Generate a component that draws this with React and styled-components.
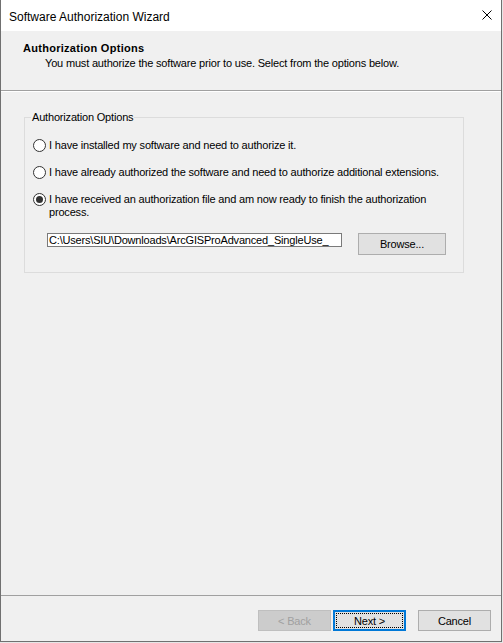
import React from "react";
import styled, { createGlobalStyle } from "styled-components";

const GlobalStyle = createGlobalStyle`
  html, body {
    margin: 0;
    padding: 0;
    background: #e6e6e6;
  }
  * {
    box-sizing: border-box;
  }
`;

export default function App() {
  return (
    <>
      <GlobalStyle />
      <Window>
        <TitleBar>
          <Title>Software Authorization Wizard</Title>
          <CloseIcon viewBox="0 0 10 10">
            <path d="M0.5 0.5 L9.5 9.5 M9.5 0.5 L0.5 9.5" stroke="#000" strokeWidth="1" />
          </CloseIcon>
        </TitleBar>

        <Header>
          <HeaderTitle>Authorization Options</HeaderTitle>
          <HeaderText>
            You must authorize the software prior to use. Select from the options below.
          </HeaderText>
        </Header>

        <Body>
          <Group>
            <Legend>Authorization Options</Legend>
            <Option>
              <Radio />
              <OptionText>I have installed my software and need to authorize it.</OptionText>
            </Option>
            <Option>
              <Radio />
              <OptionText>
                I have already authorized the software and need to authorize additional extensions.
              </OptionText>
            </Option>
            <Option>
              <Radio checked />
              <OptionText>
                I have received an authorization file and am now ready to finish the authorization
                <br />
                process.
              </OptionText>
            </Option>
            <FileRow>
              <PathInput>C:\Users\SIU\Downloads\ArcGISProAdvanced_SingleUse_</PathInput>
              <Button wide>Browse...</Button>
            </FileRow>
          </Group>
        </Body>

        <Footer>
          <Button disabled>&lt; Back</Button>
          <Button primary>Next &gt;</Button>
          <Button gap>Cancel</Button>
        </Footer>
      </Window>
    </>
  );
}

const Window = styled.div`
  width: 502px;
  height: 642px;
  display: flex;
  flex-direction: column;
  background: #f0f0f0;
  border: 1px solid #707070;
  border-top: none;
  font-family: "Liberation Sans", Arial, sans-serif;
  font-size: 11px;
  letter-spacing: -0.18px;
  color: #000;
`;

const TitleBar = styled.div`
  height: 31px;
  flex-shrink: 0;
  background: #fff;
  display: flex;
  align-items: center;
  justify-content: space-between;
  padding: 0 9px 0 8px;
  letter-spacing: 0;
`;

const Title = styled.span`
  font-size: 12px;
  line-height: 14px;
  margin-top: 2px;
`;

const CloseIcon = styled.svg`
  width: 10px;
  height: 10px;
  margin-top: -1px;
`;

const Header = styled.div`
  height: 60px;
  flex-shrink: 0;
  padding: 10px 0 0 22px;
  border-bottom: 1px solid #a0a0a0;
  box-shadow: 0 1px 0 #fff;
`;

const HeaderTitle = styled.div`
  font-weight: bold;
  line-height: 14px;
  letter-spacing: 0.28px;
`;

const HeaderText = styled.div`
  margin: 2px 0 0 22px;
  line-height: 13px;
`;

const Body = styled.div`
  flex: 1;
  padding: 20px 0 0 23px;
`;

const Group = styled.fieldset`
  width: 440px;
  height: 162px;
  margin: 0;
  padding: 15px 0 0 8px;
  border: 1px solid #dcdcdc;
`;

const Legend = styled.legend`
  margin-left: -2px;
  padding: 0 1px;
  line-height: 13px;
`;

const Option = styled.label`
  display: flex;
  align-items: flex-start;
  gap: 3px;
  margin-bottom: 14px;
`;

const Radio = styled.span`
  width: 13px;
  height: 13px;
  flex-shrink: 0;
  border: 1px solid #333;
  border-radius: 50%;
  background: #fff;
  display: flex;
  align-items: center;
  justify-content: center;

  &::after {
    content: "";
    width: 7px;
    height: 7px;
    border-radius: 50%;
    background: ${(p) => (p.checked ? "#333" : "transparent")};
  }
`;

const OptionText = styled.span`
  line-height: 13px;
`;

const FileRow = styled.div`
  display: flex;
  align-items: flex-start;
  gap: 16px;
  margin: 4px 0 0 14px;
`;

const PathInput = styled.div`
  width: 295px;
  height: 14px;
  border: 1px solid #7a7a7a;
  background: #fff;
  line-height: 12px;
  padding-left: 1px;
  white-space: nowrap;
  overflow: hidden;
`;

const Footer = styled.div`
  height: 46px;
  flex-shrink: 0;
  border-top: 1px solid #a0a0a0;
  display: flex;
  justify-content: flex-end;
  align-items: flex-start;
  gap: 2px;
  padding: 14px 10px 0 0;
`;

const Button = styled.div`
  position: relative;
  width: ${(p) => (p.wide ? "88px" : "73px")};
  height: ${(p) => (p.wide ? "22px" : "21px")};
  margin-left: ${(p) => (p.gap ? "10px" : "0")};
  display: flex;
  align-items: center;
  justify-content: center;
  font-family: "Liberation Sans", Arial, sans-serif;
  font-size: 11px;
  background: ${(p) => (p.disabled ? "#cccccc" : "#e1e1e1")};
  color: ${(p) => (p.disabled ? "#a0a0a0" : "#000")};
  border: 1px solid ${(p) => (p.primary ? "#0078d7" : p.disabled ? "#bfbfbf" : "#adadad")};
  box-shadow: ${(p) => (p.primary ? "inset 0 0 0 1px #0078d7" : "none")};

  &::after {
    content: "";
    display: ${(p) => (p.primary ? "block" : "none")};
    position: absolute;
    inset: 2px;
    border: 1px dotted #000;
  }
`;
